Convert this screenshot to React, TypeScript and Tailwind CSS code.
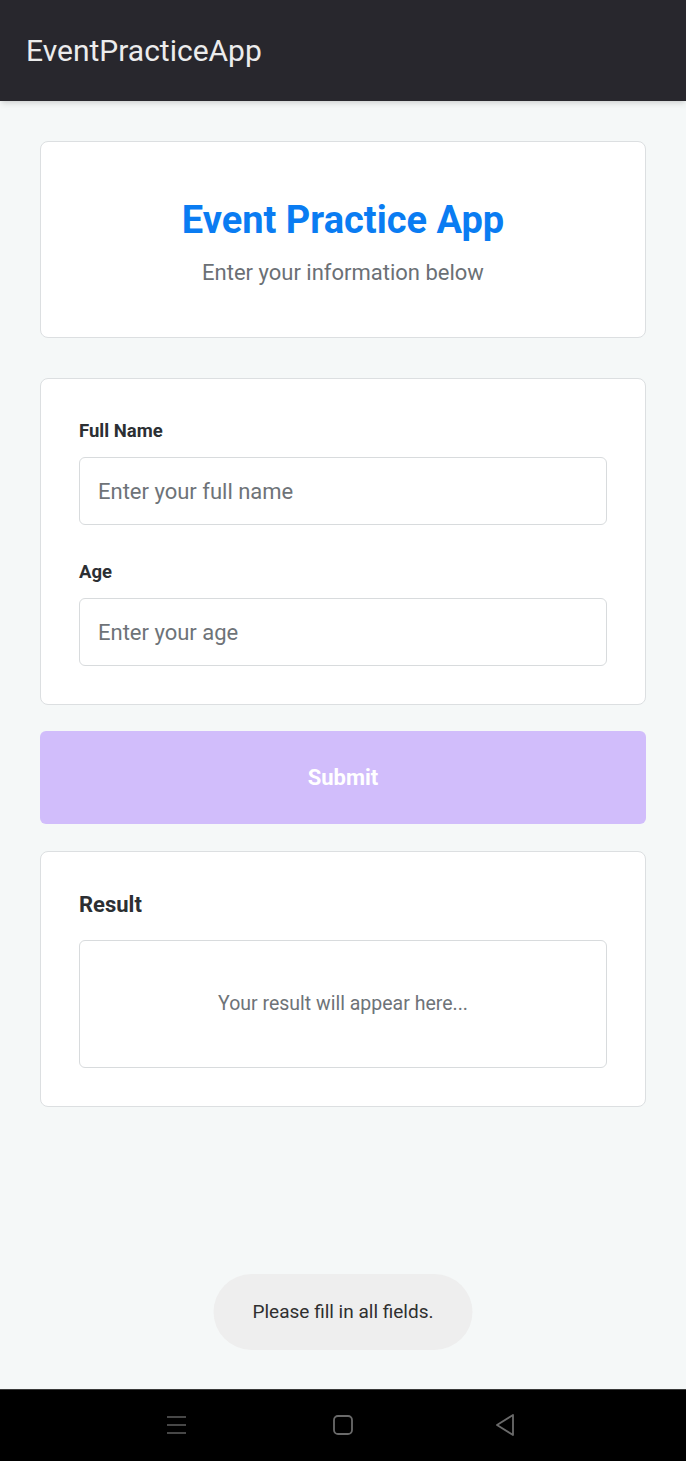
import React from 'react';

const App = () => {
  return (
    <div className="min-h-[1461px] flex flex-col bg-[#f5f8f8] font-['Roboto',sans-serif]">
      {/* App bar */}
      <header className="h-[101px] bg-[#28272d] flex items-center px-[26px] shadow-md">
        <h1 className="text-[30px] text-[#ececec] font-normal">EventPracticeApp</h1>
      </header>

      <main className="flex-1 relative px-[40px] pt-[40px]">
        {/* Intro card */}
        <section className="h-[197px] bg-white border border-[#dcdfe1] rounded-lg flex flex-col items-center justify-center">
          <h2 className="text-[38px] font-bold text-[#0a7cf2] leading-none mt-[10px]">Event Practice App</h2>
          <p className="text-[22px] text-[#6b7075] mt-[17px]">Enter your information below</p>
        </section>

        {/* Form card */}
        <section className="mt-[40px] bg-white border border-[#dcdfe1] rounded-lg px-[38px] pt-[41px] pb-[38px]">
          <label className="block text-[18.5px] font-bold text-[#2c2f33] leading-[22px]">Full Name</label>
          <div className="mt-[15px] h-[68px] border border-[#d8dbdd] rounded-md flex items-center px-[18px] text-[22px] text-[#6e7378]">
            Enter your full name
          </div>
          <label className="block mt-[36px] text-[18.5px] font-bold text-[#2c2f33] leading-[22px]">Age</label>
          <div className="mt-[15px] h-[68px] border border-[#d8dbdd] rounded-md flex items-center px-[18px] text-[22px] text-[#6e7378]">
            Enter your age
          </div>
        </section>

        {/* Submit */}
        <button className="mt-[26px] w-full h-[93px] rounded-md bg-[#d1bdfb] text-white text-[22px] font-bold">
          Submit
        </button>

        {/* Result card */}
        <section className="mt-[27px] bg-white border border-[#dcdfe1] rounded-lg px-[38px] pt-[40px] pb-[38px]">
          <h3 className="text-[22px] font-bold text-[#2c2f33] leading-[26px]">Result</h3>
          <div className="mt-[22px] h-[128px] border border-[#d8dbdd] rounded-md flex items-center justify-center text-[19.5px] text-[#6e7378]">
            Your result will appear here...
          </div>
        </section>

        {/* Toast */}
        <div className="absolute left-1/2 -translate-x-1/2 bottom-[39px] h-[76px] px-[39px] rounded-full bg-[#eeeeee] flex items-center text-[19px] text-[#2f2f2f] whitespace-nowrap">
          Please fill in all fields.
        </div>
      </main>

      {/* System nav bar */}
      <nav className="h-[72px] bg-black border-t border-[#3a3a3a] flex items-center justify-center">
        <div className="flex items-center mr-[4px] -mt-[2px]">
          <svg width="21" height="20" viewBox="0 0 21 20" fill="none" stroke="#5f5f5f" strokeWidth="1.6">
            <path d="M1 2h19M1 10h19M1 18h19" />
          </svg>
          <svg className="ml-[145px]" width="22" height="22" viewBox="0 0 22 22" fill="none" stroke="#6a6a6a" strokeWidth="1.8">
            <rect x="2" y="2" width="18" height="18" rx="4" />
          </svg>
          <svg className="ml-[140px]" width="22" height="24" viewBox="0 0 22 24" fill="none" stroke="#6a6a6a" strokeWidth="1.8" strokeLinejoin="round">
            <path d="M19 2 L3 12 L19 22 Z" />
          </svg>
        </div>
      </nav>
    </div>
  );
};

export default App;
